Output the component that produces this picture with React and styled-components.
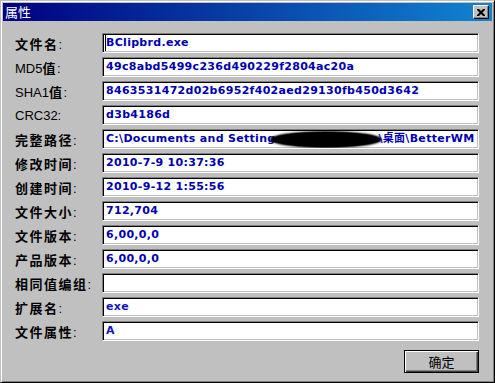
import React from "react";
import styled, { createGlobalStyle } from "styled-components";

const GlobalStyle = createGlobalStyle`
	html, body {
		margin: 0;
		padding: 0;
		background: #c0c0c0;
	}
	* {
		box-sizing: border-box;
	}
`;

const Window = styled.div`
	width: 495px;
	height: 383px;
	display: flex;
	flex-direction: column;
	padding: 2px;
	background: #c0c0c0;
	border: 1px solid;
	border-color: #c0c0c0 #000 #000 #c0c0c0;
	box-shadow: inset 1px 1px #fff, inset -1px -1px #808080;
	font-family: "Liberation Sans", "Noto Sans CJK SC", sans-serif;
`;

const TitleBar = styled.div`
	height: 18px;
	display: flex;
	align-items: center;
	justify-content: space-between;
	padding: 0 3px 0 2px;
	background: linear-gradient(to right, #000080, #1084d0);
`;

const Title = styled.span`
	color: #fff;
	font-family: "Noto Sans CJK SC", sans-serif;
	font-size: 13px;
	line-height: 18px;
`;

const CloseButton = styled.button`
	width: 16px;
	height: 14px;
	padding: 0;
	display: flex;
	align-items: center;
	justify-content: center;
	background: #c0c0c0;
	border: 1px solid;
	border-color: #fff #000 #000 #fff;
	box-shadow: inset -1px -1px #808080;
`;

const Body = styled.div`
	flex: 1;
	display: flex;
	flex-direction: column;
	padding: 12px 13px 7px 12px;
`;

const Fields = styled.div`
	display: grid;
	grid-template-columns: 87px 1fr;
	grid-auto-rows: 20px;
	row-gap: 4px;
	align-items: center;
`;

const Label = styled.span`
	font-size: 13px;
	color: #000;
	white-space: nowrap;
`;

const Cjk = styled.span`
	font-family: "Noto Sans CJK SC", sans-serif;
	font-weight: 700;
	letter-spacing: 1.5px;
`;

const Field = styled.div`
	position: relative;
	height: 20px;
	padding-left: 3px;
	overflow: hidden;
	white-space: nowrap;
	background: #fff;
	border: 1px solid;
	border-color: #808080 #fff #fff #808080;
	box-shadow: inset 1px 1px #000, inset -1px -1px #c0c0c0;
	color: ${p => (p.light ? "#1414c0" : "#0000b0")};
	font-family: "DejaVu Sans", "Noto Sans CJK SC", sans-serif;
	font-size: 11px;
	font-weight: 700;
	letter-spacing: 0.3px;
	line-height: 17px;
`;

const Caret = styled.span`
	position: absolute;
	left: 2px;
	top: 1px;
	bottom: 1px;
	width: 1px;
	background: #000;
`;

const Redacted = styled.span`
	display: inline-block;
	width: 110px;
	height: 15px;
	margin: 0 -3px 0 -4px;
	vertical-align: middle;
	background: #000;
	border-radius: 50%;
	box-shadow: 0 0 2px 1px #111;
`;

const Footer = styled.div`
	display: flex;
	justify-content: flex-end;
	margin-top: 9px;
`;

const Button = styled.button`
	width: 75px;
	height: 23px;
	padding: 0;
	background: #c0c0c0;
	border: 1px solid #000;
	box-shadow: inset 1px 1px #fff, inset -1px -1px #404040, inset -2px -2px #808080;
	font-family: "Noto Sans CJK SC", sans-serif;
	font-size: 13px;
	color: #000;
`;

// wrap the chinese parts of a label so they get the wider bitmap-ish look
function LabelText({ text }) {
	const parts = text.split(/([\u4e00-\u9fff]+)/).filter(Boolean);
	return (
		<Label>
			{parts.map((part, i) =>
				/[\u4e00-\u9fff]/.test(part) ? <Cjk key={i}>{part}</Cjk> : part
			)}
		</Label>
	);
}

const rows = [
	{ label: "文件名:", value: "BClipbrd.exe", caret: true },
	{ label: "MD5值:", value: "49c8abd5499c236d490229f2804ac20a" },
	{ label: "SHA1值:", value: "8463531472d02b6952f402aed29130fb450d3642" },
	{ label: "CRC32:", value: "d3b4186d" },
	{ label: "完整路径:", path: true },
	{ label: "修改时间:", value: "2010-7-9 10:37:36" },
	{ label: "创建时间:", value: "2010-9-12 1:55:56" },
	{ label: "文件大小:", value: "712,704" },
	{ label: "文件版本:", value: "6,00,0,0" },
	{ label: "产品版本:", value: "6,00,0,0" },
	{ label: "相同值编组:", value: "" },
	{ label: "扩展名:", value: "exe", light: true },
	{ label: "文件属性:", value: "A", light: true }
];

function CloseIcon() {
	return (
		<svg width="8" height="7" viewBox="0 0 8 7">
			<path d="M0 0h2l2 2 2-2h2v1L5.5 3.5 8 6v1H6L4 5 2 7H0V6l2.5-2.5L0 1z" fill="#000" />
		</svg>
	);
}

export default function App() {
	return (
		<>
			<GlobalStyle />
			<Window>
				<TitleBar>
					<Title>属性</Title>
					<CloseButton>
						<CloseIcon />
					</CloseButton>
				</TitleBar>
				<Body>
					<Fields>
						{rows.map(row => (
							<React.Fragment key={row.label}>
								<LabelText text={row.label} />
								<Field light={row.light}>
									{row.caret && <Caret />}
									{row.path ? (
										<>
											C:\Documents and Setting
											<Redacted />
											\桌面\BetterWM
										</>
									) : (
										row.value
									)}
								</Field>
							</React.Fragment>
						))}
					</Fields>
					<Footer>
						<Button>确定</Button>
					</Footer>
				</Body>
			</Window>
		</>
	);
}
